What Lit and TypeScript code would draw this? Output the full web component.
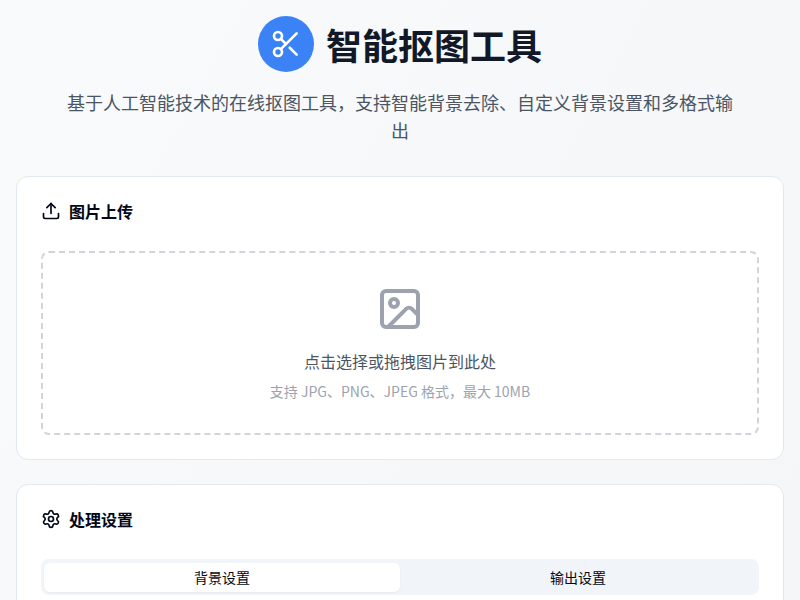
import { LitElement, html, css, svg } from "lit";
import { customElement } from "lit/decorators.js";

const icon = (cls: string, body: unknown) => html`<svg class="icon ${cls}" viewBox="0 0 24 24" fill="none" stroke="currentColor" stroke-width="2" stroke-linecap="round" stroke-linejoin="round">${body}</svg>`;

const scissors = svg`<circle cx="6" cy="6" r="3"/><path d="M8.12 8.12 12 12"/><path d="M20 4 8.12 15.88"/><circle cx="6" cy="18" r="3"/><path d="M14.8 14.8 20 20"/>`;
const upload = svg`<path d="M12 3v12"/><path d="m17 8-5-5-5 5"/><path d="M21 15v4a2 2 0 0 1-2 2H5a2 2 0 0 1-2-2v-4"/>`;
const image = svg`<rect width="18" height="18" x="3" y="3" rx="2" ry="2"/><circle cx="9" cy="9" r="2"/><path d="m21 15-3.086-3.086a2 2 0 0 0-2.828 0L6 21"/>`;
const settings = svg`<path d="M9.671 4.136a2.34 2.34 0 0 1 4.659 0 2.34 2.34 0 0 0 3.319 1.915 2.34 2.34 0 0 1 2.33 4.033 2.34 2.34 0 0 0 0 3.831 2.34 2.34 0 0 1-2.33 4.033 2.34 2.34 0 0 0-3.319 1.915 2.34 2.34 0 0 1-4.659 0 2.34 2.34 0 0 0-3.32-1.915 2.34 2.34 0 0 1-2.33-4.033 2.34 2.34 0 0 0 0-3.831A2.34 2.34 0 0 1 6.35 6.051a2.34 2.34 0 0 0 3.319-1.915"/><circle cx="12" cy="12" r="3"/>`;

@customElement("app-root")
export class AppRoot extends LitElement {
  static styles = css`
    :host { display: block; height: 100vh; overflow: hidden; background: linear-gradient(to bottom right, #f8fafc, #f3f4f6) 0 0 / 100% 1480px no-repeat; color: #020817; font-family: "Noto Sans CJK SC", sans-serif; line-height: 1.5; }
    * { box-sizing: border-box; margin: 0; }
    .page { padding: 16px; }
    .header { text-align: center; margin-bottom: 32px; }
    .brand { display: flex; align-items: center; justify-content: center; gap: 12px; margin-bottom: 16px; }
    .logo { display: flex; padding: 12px; border-radius: 50%; background: #3b82f6; color: #fff; }
    .icon { display: block; flex: none; }
    .s32 { width: 32px; height: 32px; }
    .s20 { width: 20px; height: 20px; }
    .s48 { width: 48px; height: 48px; color: #9ca3af; margin: 0 auto 16px; }
    h1 { font-size: 36px; line-height: 40px; font-weight: 700; color: #111827; }
    .intro { max-width: 672px; margin: 0 auto; font-size: 18px; line-height: 28px; color: #4b5563; }
    .cards { display: flex; flex-direction: column; gap: 24px; }
    .card { background: #fff; border: 1px solid #e2e8f0; border-radius: 12px; padding: 24px; }
    .card-title { display: flex; align-items: center; gap: 8px; font-size: 16px; line-height: 20px; font-weight: 700; margin-bottom: 30px; }
    .drop { border: 2px dashed #d1d5db; border-radius: 8px; padding: 32px; text-align: center; height: 184px; }
    .prompt { font-size: 16px; line-height: 24px; color: #4b5563; margin-bottom: 8px; }
    .hint { font-size: 14px; line-height: 20px; color: #9ca3af; }
    .tabs { display: grid; grid-template-columns: 1fr 1fr; align-items: center; height: 36px; padding: 3px; border-radius: 8px; background: #f1f5f9; font-size: 14px; line-height: 20px; }
    .tab { display: flex; align-items: center; justify-content: center; height: calc(100% - 1px); border-radius: 6px; }
    .active { background: #fff; box-shadow: 0 1px 2px rgba(0,0,0,.05); }
  `;
  render() {
    return html`<div class="page">
      <header class="header">
        <div class="brand"><div class="logo">${icon("s32", scissors)}</div><h1>智能抠图工具</h1></div>
        <p class="intro">基于人工智能技术的在线抠图工具，支持智能背景去除、自定义背景设置和多格式输出</p>
      </header>
      <main class="cards">
        <section class="card">
          <div class="card-title">${icon("s20", upload)}<span>图片上传</span></div>
          <div class="drop">${icon("s48", image)}<p class="prompt">点击选择或拖拽图片到此处</p><p class="hint">支持 JPG、PNG、JPEG 格式，最大 10MB</p></div>
        </section>
        <section class="card">
          <div class="card-title">${icon("s20", settings)}<span>处理设置</span></div>
          <div class="tabs"><div class="tab active">背景设置</div><div class="tab">输出设置</div></div>
        </section>
      </main>
    </div>`;
  }
}
